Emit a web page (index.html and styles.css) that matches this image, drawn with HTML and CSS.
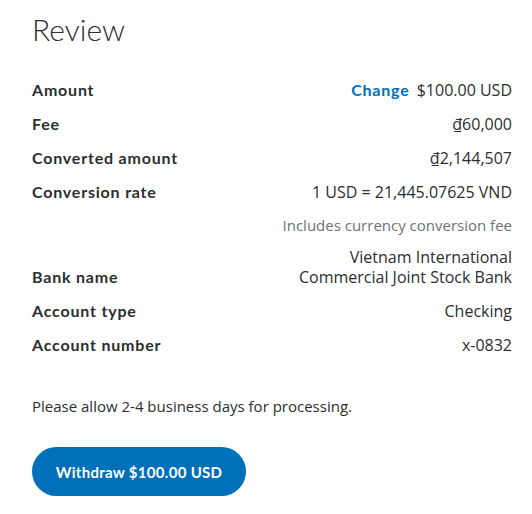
FILE: index.html
```html
<!DOCTYPE html>
<html lang="en">
<head>
    <meta charset="UTF-8">
    <meta name="viewport" content="width=device-width, initial-scale=1.0">
    <title>Review</title>
    <link rel="stylesheet" href="styles.css">
</head>
<body>
    <div class="review">
        <h1 class="title">Review</h1>

        <div class="details">
            <div class="row">
                <div class="label">Amount</div>
                <div class="value"><a href="#" class="change">Change</a> $100.00 USD</div>
            </div>
            <div class="row">
                <div class="label">Fee</div>
                <div class="value">₫60,000</div>
            </div>
            <div class="row">
                <div class="label">Converted amount</div>
                <div class="value">₫2,144,507</div>
            </div>
            <div class="row">
                <div class="label">Conversion rate</div>
                <div class="value">1 USD = 21,445.07625 VND</div>
            </div>
            <div class="row note">
                <div class="value muted">Includes currency conversion fee</div>
            </div>
            <div class="row">
                <div class="label">Bank name</div>
                <div class="value">Vietnam International<br>Commercial Joint Stock Bank</div>
            </div>
            <div class="row">
                <div class="label">Account type</div>
                <div class="value">Checking</div>
            </div>
            <div class="row">
                <div class="label">Account number</div>
                <div class="value">x-0832</div>
            </div>
        </div>

        <p class="notice">Please allow 2-4 business days for processing.</p>

        <button class="withdraw">Withdraw $100.00 USD</button>
    </div>
</body>
</html>
```

FILE: styles.css
```css
* {
    margin: 0;
    padding: 0;
    box-sizing: border-box;
}

body {
    font-family: "Open Sans", Arial, sans-serif;
    color: #2c2e2f;
    background-color: white;
}

.review {
    padding: 9px 20px 0 32px;
}

/* Heading */
.title {
    font-family: Lato, sans-serif;
    font-weight: 300;
    font-size: 30px;
    line-height: 40px;
    margin-bottom: 24px;
}

/* Detail rows */
.details {
    display: flex;
    flex-direction: column;
}

.row {
    display: flex;
    justify-content: space-between;
    align-items: flex-end;
    padding: 7px 0;
    line-height: 20px;
}

.row.note {
    justify-content: flex-end;
    padding: 6px 0 5px;
}

.label {
    font-family: Lato, sans-serif;
    font-weight: bold;
    font-size: 16px;
    letter-spacing: 0.8px;
}

.value {
    font-size: 16px;
    text-align: right;
}

.value.muted {
    font-size: 15px;
    color: #6c7378;
}

.change {
    font-family: Lato, sans-serif;
    font-weight: bold;
    color: #0070ba;
    text-decoration: none;
    margin-right: 3px;
    letter-spacing: 0.8px;
}

.notice {
    font-size: 15px;
    margin-top: 34px;
    line-height: 20px;
}

/* Main button */
.withdraw {
    margin-top: 31px;
    width: 214px;
    height: 49px;
    border: none;
    border-radius: 25px;
    background-color: #0070ba;
    color: white;
    font-family: Lato, sans-serif;
    font-weight: bold;
    font-size: 15px;
    letter-spacing: 0.3px;
    cursor: pointer;
}
```
